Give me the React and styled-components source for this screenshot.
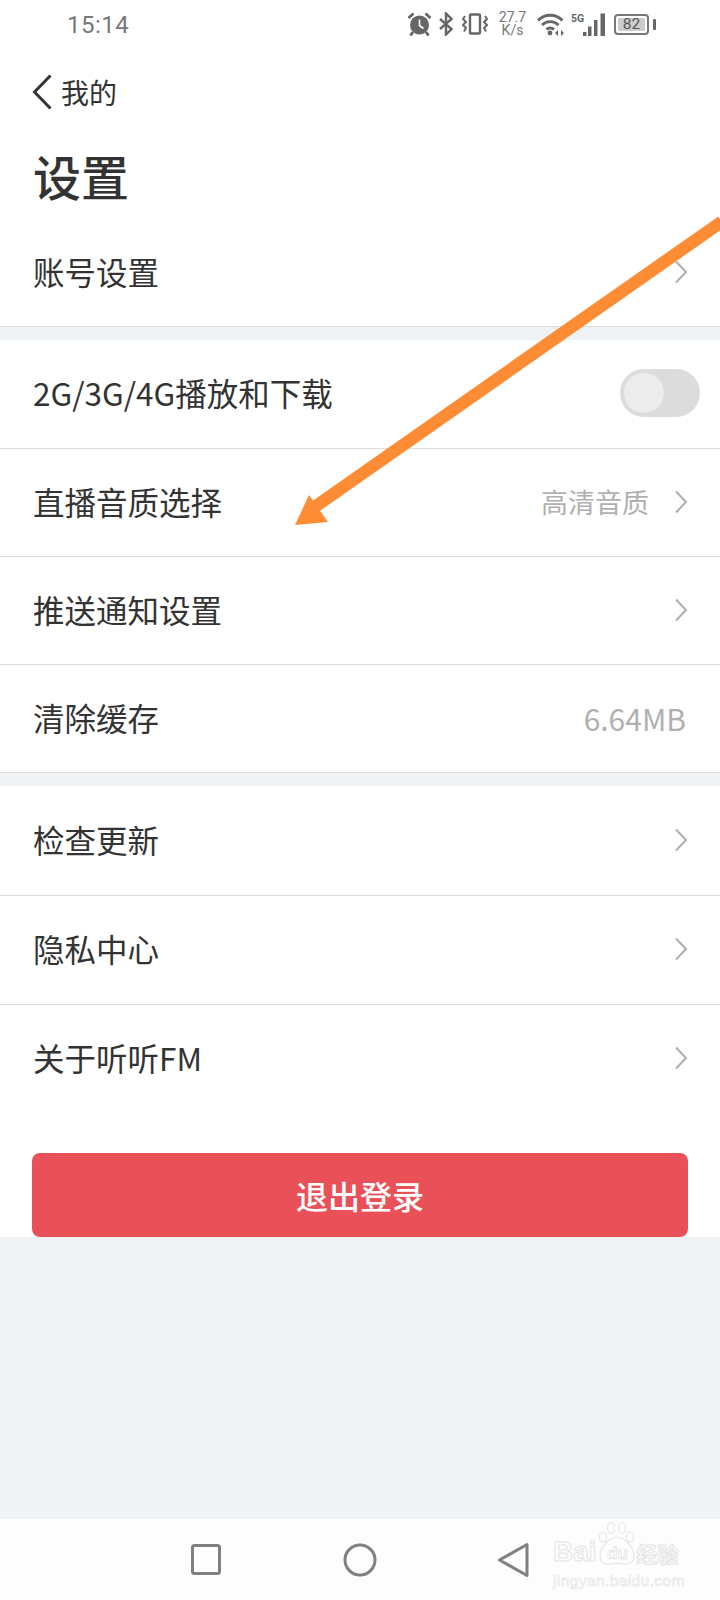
import React from 'react';
import styled, { createGlobalStyle } from 'styled-components';

const GlobalStyle = createGlobalStyle`
  html, body {
    margin: 0;
    padding: 0;
    background: #f0f3f6;
  }
  * {
    box-sizing: border-box;
  }
`;

const Page = styled.div`
  position: relative;
  width: 720px;
  height: 1600px;
  display: flex;
  flex-direction: column;
  overflow: hidden;
  background: #f0f3f6;
  color: #333;
  font-family: "Noto Sans CJK SC", "Noto Sans", sans-serif;
`;

const Top = styled.div`
  background: #fff;
`;

const StatusBar = styled.div`
  height: 52px;
  display: flex;
  align-items: center;
  justify-content: space-between;
  padding: 0 64px 2px 67px;
`;

const Time = styled.span`
  font-family: Roboto, sans-serif;
  font-size: 24px;
  letter-spacing: 0.5px;
  color: #777;
`;

const StatusIcons = styled.div`
  display: flex;
  align-items: center;
  margin-bottom: 2px;
`;

const Glyph = styled.svg`
  display: block;
  margin-right: ${(props) => props.$after || 0}px;
`;

const Speed = styled.div`
  width: 27px;
  margin-right: 11px;
  display: flex;
  flex-direction: column;
  align-items: center;
  font-family: Roboto, sans-serif;
  font-size: 14px;
  line-height: 13px;
  color: #777;
`;

const Battery = styled.div`
  display: flex;
  align-items: center;
  gap: 4px;
`;

const BatteryBody = styled.div`
  width: 35px;
  height: 21px;
  padding: 2px;
  border: 2px solid #777;
  border-radius: 4px;
  display: flex;
`;

const BatteryLevel = styled.div`
  flex: 1;
  background: #ccc;
  border-radius: 1px;
  display: flex;
  align-items: center;
  justify-content: center;
  font-family: Roboto, sans-serif;
  font-size: 15.5px;
  color: #555;
`;

const BatteryTip = styled.div`
  width: 3px;
  height: 11px;
  background: #666;
  border-radius: 1px;
`;

const BackRow = styled.div`
  height: 78px;
  display: flex;
  align-items: center;
  gap: 9px;
  padding: 2px 0 0 32px;
`;

const BackLabel = styled.span`
  font-size: 28px;
  color: #333;
`;

const Title = styled.h1`
  margin: 0;
  height: 88px;
  display: flex;
  align-items: flex-start;
  padding: 21px 0 0 33px;
  font-size: 48px;
  font-weight: 500;
  line-height: 1;
  color: #333;
`;

const Group = styled.div`
  background: #fff;
  border-bottom: ${(props) => (props.$plain ? 'none' : '1px solid #dcdcdc')};
  margin-bottom: ${(props) => (props.$plain ? '0' : '13px')};
`;

const Row = styled.div`
  height: ${(props) => props.$height || 108}px;
  display: flex;
  align-items: center;
  justify-content: space-between;
  padding: 0 32px ${(props) => (props.$flush ? 0 : 2)}px 33px;
  border-bottom: ${(props) => (props.$last ? 'none' : '1px solid #dcdcdc')};
`;

const Label = styled.span`
  font-size: 31.5px;
  line-height: 1;
  color: #333;
`;

const Trail = styled.div`
  display: flex;
  align-items: center;
  gap: 25px;
`;

const Value = styled.span`
  font-size: ${(props) => (props.$latin ? '30px' : '27px')};
  margin-right: ${(props) => (props.$latin ? '2px' : '0')};
  line-height: 1;
  color: #b0b0b0;
`;

const Chevron = styled.svg`
  width: 14px;
  height: 24px;
  fill: none;
  stroke: #aeaeae;
  stroke-width: 2;
`;

const Toggle = styled.div`
  width: 80px;
  height: 48px;
  margin-right: -12px;
  padding: 4px;
  border-radius: 24px;
  background: #dcdcdc;
`;

const Knob = styled.div`
  width: 40px;
  height: 40px;
  border-radius: 50%;
  background: #ececec;
`;

const ButtonArea = styled.div`
  background: #fff;
  padding: 40px 32px 0;
`;

const LogoutButton = styled.button`
  display: block;
  width: 100%;
  height: 84px;
  border: 0;
  border-radius: 8px;
  background: #ea5058;
  color: #fff;
  font-family: inherit;
  font-size: 32px;
  font-weight: 500;
`;

const Spacer = styled.div`
  flex: 1;
`;

const NavBar = styled.div`
  height: 81px;
  display: grid;
  grid-template-columns: 153px 154px 153px;
  justify-content: start;
  align-items: center;
  justify-items: center;
  padding-left: 129.5px;
  background: #fdfdfd;
`;

const NavIcon = styled.svg`
  width: 36px;
  height: 36px;
  fill: none;
  stroke: #808080;
  stroke-width: 3;
  stroke-linejoin: round;
`;

const Arrow = styled.svg`
  position: absolute;
  left: 0;
  top: 0;
  width: 720px;
  height: 600px;
  pointer-events: none;
`;

const Watermark = styled.div`
  position: absolute;
  left: 553px;
  top: 1522px;
  width: 130px;
  color: transparent;
  -webkit-text-stroke: 1px #e4e4e4;
`;

const MarkTop = styled.div`
  display: flex;
  align-items: flex-end;
  height: 44px;
`;

const MarkBai = styled.span`
  font-family: "Liberation Sans", sans-serif;
  font-size: 28px;
  font-weight: 700;
  line-height: 28px;
`;

const MarkJing = styled.span`
  font-size: 21px;
  line-height: 26px;
  font-weight: 700;
`;

const MarkUrl = styled.div`
  font-family: "Liberation Sans", sans-serif;
  font-size: 15.5px;
  line-height: 15px;
  letter-spacing: 0.4px;
  padding-top: 7px;
  box-sizing: content-box;
  -webkit-text-stroke: 0.6px #e4e4e4;
`;

function ChevronIcon() {
  return (
    <Chevron viewBox="0 0 14 24">
      <path d="M2 1.5 L12 12 L2 22.5" />
    </Chevron>
  );
}

function StatusIconSet() {
  return (
    <StatusIcons>
      <Glyph $after={7} width="25" height="24" viewBox="0 0 25 24">
        <circle cx="12.5" cy="13" r="9.5" fill="#666" />
        <path d="M12.5 7.5v6l4 3" fill="none" stroke="#fff" strokeWidth="1.6" />
        <path d="M1.5 6l5-4.5M23.5 6l-5-4.5M6 20l-2.5 3.5M19 20l2.5 3.5" stroke="#666" strokeWidth="2.8" fill="none" />
      </Glyph>
      <Glyph $after={9} width="14" height="24" viewBox="0 0 14 24">
        <path d="M1 7l11.5 10-5.5 5.5V1.5l5.5 5.5L1 17" fill="none" stroke="#666" strokeWidth="2.4" />
      </Glyph>
      <Glyph $after={11} width="26" height="24" viewBox="0 0 26 24">
        <rect x="8" y="2.5" width="10" height="19" rx="1" fill="none" stroke="#666" strokeWidth="2.4" />
        <path d="M3 4L1 7l3 3-3 3 3 3-2 3.5M23 4l2 3-3 3 3 3-3 3 2 3.5" fill="none" stroke="#666" strokeWidth="2" />
      </Glyph>
      <Speed>
        <span>27.7</span>
        <span>K/s</span>
      </Speed>
      <Glyph $after={6} width="28" height="24" viewBox="0 0 28 24">
        <path d="M1 8.5C7.5 1.5 19 1.5 25.5 8.5M5 13c4.5-4.5 12-4.5 16.5 0M9.5 17.500c2-2 5.500-2 7.500 0" fill="none" stroke="#666" strokeWidth="2.8" />
        <circle cx="13" cy="21" r="2.4" fill="#666" />
        <path d="M21 18v6l-3-3zM24 18v6l3-3z" fill="#666" />
      </Glyph>
      <Glyph $after={7} width="36" height="24" viewBox="0 0 36 24">
        <text x="0" y="10" fontFamily="Roboto, sans-serif" fontSize="10.5" fontWeight="700" fill="#666">5G</text>
        <path d="M12 20h3.5v4H12zM17 14.5h3.5V24H17zM23 8h3.5v16H23zM29.5 1.5H34V24h-4.5z" fill="#666" />
      </Glyph>
      <Battery>
        <BatteryBody>
          <BatteryLevel>82</BatteryLevel>
        </BatteryBody>
        <BatteryTip />
      </Battery>
    </StatusIcons>
  );
}

export default function App() {
  return (
    <>
      <GlobalStyle />
      <Page>
        <Top>
          <StatusBar>
            <Time>15:14</Time>
            <StatusIconSet />
          </StatusBar>
          <BackRow>
            <svg width="20" height="36" viewBox="0 0 20 36">
              <path d="M18.5 1.5L2.5 18 18.5 34.5" fill="none" stroke="#333" strokeWidth="3" />
            </svg>
            <BackLabel>我的</BackLabel>
          </BackRow>
          <Title>设置</Title>
        </Top>
        <Group>
          <Row $height={108} $last $flush>
            <Label>账号设置</Label>
            <ChevronIcon />
          </Row>
        </Group>
        <Group>
          <Row $height={109}>
            <Label>2G/3G/4G播放和下载</Label>
            <Toggle>
              <Knob />
            </Toggle>
          </Row>
          <Row>
            <Label>直播音质选择</Label>
            <Trail>
              <Value>高清音质</Value>
              <ChevronIcon />
            </Trail>
          </Row>
          <Row>
            <Label>推送通知设置</Label>
            <ChevronIcon />
          </Row>
          <Row $height={107} $last>
            <Label>清除缓存</Label>
            <Value $latin>6.64MB</Value>
          </Row>
        </Group>
        <Group $plain>
          <Row $height={110}>
            <Label>检查更新</Label>
            <ChevronIcon />
          </Row>
          <Row $height={109}>
            <Label>隐私中心</Label>
            <ChevronIcon />
          </Row>
          <Row $height={108} $last>
            <Label>关于听听FM</Label>
            <ChevronIcon />
          </Row>
        </Group>
        <ButtonArea>
          <LogoutButton>退出登录</LogoutButton>
        </ButtonArea>
        <Spacer />
        <NavBar>
          <NavIcon viewBox="0 0 36 36">
            <rect x="4.5" y="3.5" width="27" height="28" rx="2" />
          </NavIcon>
          <NavIcon viewBox="0 0 36 36">
            <circle cx="18" cy="18" r="15" />
          </NavIcon>
          <NavIcon viewBox="0 0 36 36">
            <path d="M32 2.5V33.5L4.5 18z" />
          </NavIcon>
        </NavBar>
        <Arrow viewBox="0 0 720 600">
          <path d="M722 221.5L316 506" stroke="#fd8c35" strokeWidth="12.5" fill="none" />
          <path d="M295 525L309 495L328 522z" fill="#fd8c35" />
        </Arrow>
        <Watermark>
          <MarkTop>
            <MarkBai>Bai</MarkBai>
            <svg width="40" height="44" viewBox="0 0 40 44">
              <g fill="none" stroke="#e4e4e4" strokeWidth="1.2">
                <ellipse cx="6" cy="15" rx="3.5" ry="5" />
                <ellipse cx="14" cy="6" rx="3.5" ry="5.5" />
                <ellipse cx="25" cy="6" rx="3.5" ry="5.5" />
                <ellipse cx="33" cy="15" rx="3.5" ry="5" />
                <path d="M20 15c7 0 17 10 17 19 0 6-5 9-10 8-5-1-9-1-14 0-5 1-10-2-10-8 0-9 10-19 17-19z" />
              </g>
              <text x="10" y="37" fontFamily="Liberation Sans, sans-serif" fontSize="17" fontWeight="700" fill="none" stroke="#e4e4e4" strokeWidth="0.8">du</text>
            </svg>
            <MarkJing>经验</MarkJing>
          </MarkTop>
          <MarkUrl>jingyan.baidu.com</MarkUrl>
        </Watermark>
      </Page>
    </>
  );
}
